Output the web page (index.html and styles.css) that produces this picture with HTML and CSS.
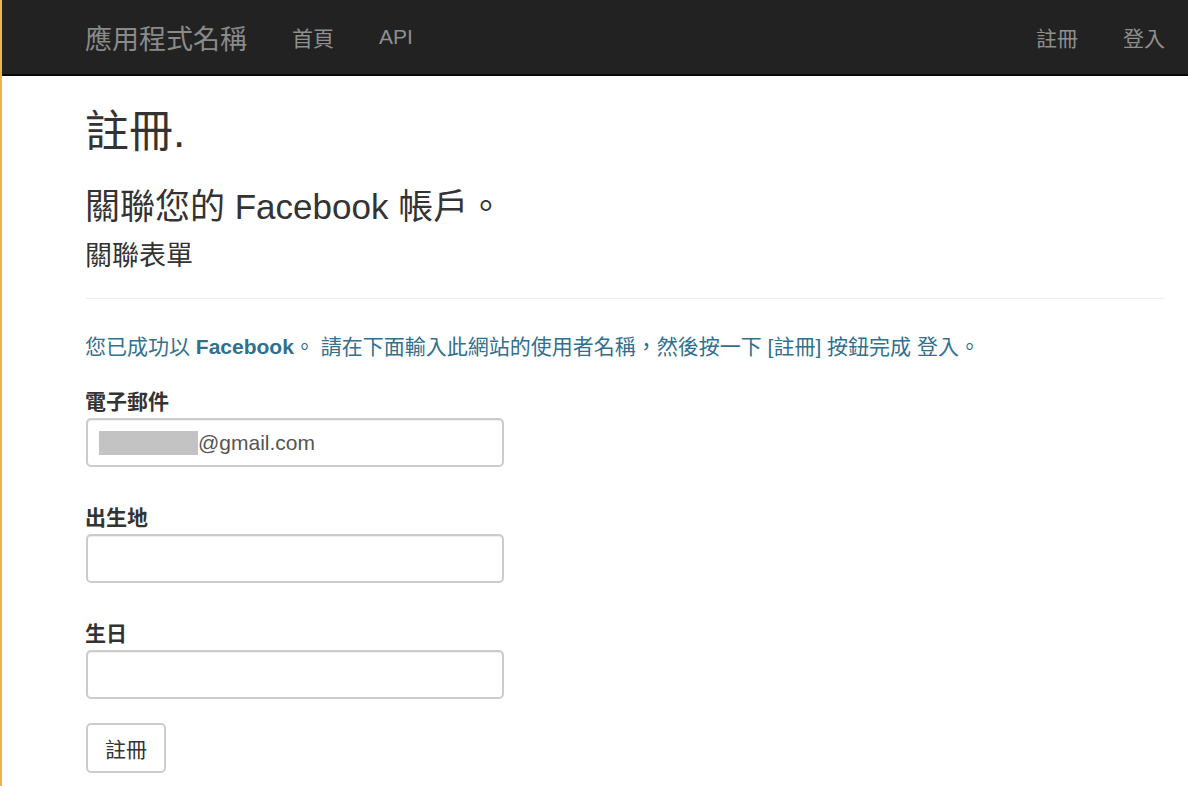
FILE: index.html
```html
<!DOCTYPE html>
<html lang="zh-Hant">
<head>
<meta charset="utf-8">
<title>註冊</title>
<link rel="stylesheet" href="styles.css">
</head>
<body>
<header class="navbar">
  <div class="nav-left">
    <a class="brand" href="#">應用程式名稱</a>
    <a class="nav-link" href="#">首頁</a>
    <a class="nav-link" href="#">API</a>
  </div>
  <div class="nav-right">
    <a class="nav-link" href="#">註冊</a>
    <a class="nav-link last" href="#">登入</a>
  </div>
</header>
<main class="content">
  <h1 class="title">註冊.</h1>
  <h2 class="subtitle">關聯您的 Facebook 帳戶。</h2>
  <h3 class="section">關聯表單</h3>
  <hr class="rule">
  <p class="info">您已成功以 <strong>Facebook</strong>。 請在下面輸入此網站的使用者名稱，然後按一下 [註冊] 按鈕完成 登入。</p>
  <form class="form">
    <div class="form-group">
      <label class="label">電子郵件</label>
      <div class="field"><span class="redact"></span>@gmail.com</div>
    </div>
    <div class="form-group">
      <label class="label">出生地</label>
      <div class="field"></div>
    </div>
    <div class="form-group">
      <label class="label">生日</label>
      <div class="field"></div>
    </div>
    <button type="button" class="btn">註冊</button>
  </form>
</main>
</body>
</html>
```
FILE: styles.css
```css
html, body {
  margin: 0;
  padding: 0;
}
body {
  border-left: 2px solid #e8b64e;
  min-height: 786px;
  box-sizing: border-box;
  font-family: "Liberation Sans", "Noto Sans CJK TC", sans-serif;
  color: #333;
  background: #fff;
}
.navbar {
  height: 74px;
  background: #222;
  border-bottom: 2px solid #080808;
  display: flex;
  align-items: center;
  justify-content: space-between;
  padding: 0 23px 0 83px;
}
.nav-left, .nav-right {
  display: flex;
  align-items: center;
}
.brand {
  font-size: 27px;
  color: #8a8a8a;
  text-decoration: none;
  margin-right: 45px;
}
.nav-link {
  font-size: 21px;
  color: #8f8f8f;
  text-decoration: none;
  margin-right: 45px;
}
.nav-link.last {
  margin-right: 0;
}
.content {
  padding: 0 24px 0 83px;
}
.title {
  font-size: 44px;
  font-weight: 400;
  line-height: 48px;
  margin: 32px 0 0;
}
.subtitle {
  font-size: 35px;
  font-weight: 400;
  line-height: 38px;
  margin: 32px 0 0;
}
.section {
  font-size: 27px;
  font-weight: 400;
  line-height: 30px;
  margin: 15px 0 0;
}
.rule {
  border: 0;
  border-top: 1px solid #eee;
  margin: 27px 0 0 1px;
}
.info {
  font-size: 21px;
  line-height: 28px;
  color: #31708f;
  margin: 34px 0 0;
}
.form {
  margin-top: 27px;
  display: flex;
  flex-direction: column;
  align-items: flex-start;
}
.form-group {
  display: flex;
  flex-direction: column;
  margin-bottom: 37px;
}
.label {
  font-size: 21px;
  font-weight: 700;
  line-height: 28px;
  margin-bottom: 2px;
}
.field {
  width: 418px;
  height: 49px;
  margin-left: 1px;
  box-sizing: border-box;
  border: 2px solid #ccc;
  border-radius: 5px;
  box-shadow: inset 0 1px 1px rgba(0,0,0,.075);
  padding: 0 11px;
  display: flex;
  align-items: center;
  font-size: 21px;
  color: #555;
}
.redact {
  display: inline-block;
  width: 99px;
  height: 24px;
  background: #c3c3c3;
}
.btn {
  margin-top: -13px;
  margin-left: 1px;
  width: 80px;
  height: 50px;
  box-sizing: border-box;
  border: 2px solid #ccc;
  border-radius: 5px;
  background: #fff;
  color: #333;
  font-family: "Liberation Sans", "Noto Sans CJK TC", sans-serif;
  font-size: 21px;
  padding: 0;
}
```
